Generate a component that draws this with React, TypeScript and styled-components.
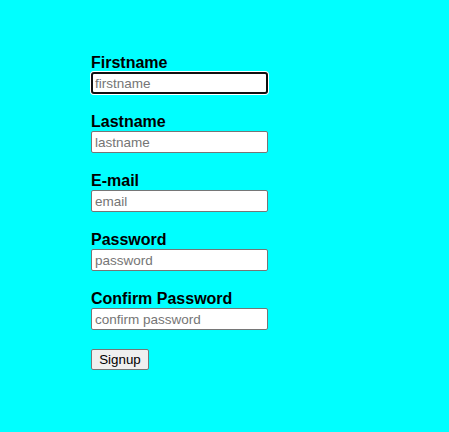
import React from "react";
import styled, { createGlobalStyle, css } from "styled-components";

const GlobalStyle = createGlobalStyle`
  html, body {
    margin: 0;
    padding: 0;
    background: #00ffff;
  }
  body {
    font-family: "Liberation Sans", Arial, sans-serif;
  }
`;

const Page = styled.div`
  width: 449px;
  height: 432px;
  background: #00ffff;
  padding: 54px 0 0 91px;
  box-sizing: border-box;
`;

const Form = styled.form`
  display: flex;
  flex-direction: column;
  align-items: flex-start;
  gap: 19px;
`;

const Field = styled.div`
  display: flex;
  flex-direction: column;
`;

const Label = styled.label`
  font-size: 16px;
  font-weight: bold;
  line-height: 18px;
  color: #000;
`;

interface InputProps {
  $focused?: boolean;
}

const Input = styled.input<InputProps>`
  width: 177px;
  height: 22px;
  box-sizing: border-box;
  margin: 0;
  padding: 1px 3px;
  border: 1px solid #767676;
  border-radius: 2px;
  background: #fff;
  font-family: "Liberation Sans", Arial, sans-serif;
  font-size: 13.5px;
  color: #000;
  outline: none;
  &::placeholder {
    color: #757575;
  }
  ${(p) =>
    p.$focused &&
    css`
      border: 2px solid #101010;
      border-radius: 3px;
      padding: 0 2px;
      box-shadow: 0 0 0 1px #fff;
    `}
`;

const SubmitButton = styled.button`
  height: 21px;
  width: 58px;
  padding: 0;
  border: 1px solid #767676;
  border-radius: 2px;
  background: #efefef;
  font-family: "Liberation Sans", Arial, sans-serif;
  font-size: 13.33px;
  color: #000;
`;

const fields = [
  { label: "Firstname", placeholder: "firstname", type: "text", focused: true },
  { label: "Lastname", placeholder: "lastname", type: "text" },
  { label: "E-mail", placeholder: "email", type: "email" },
  { label: "Password", placeholder: "password", type: "password" },
  { label: "Confirm Password", placeholder: "confirm password", type: "password" },
];

export default function App() {
  return (
    <>
      <GlobalStyle />
      <Page>
        <Form onSubmit={(e) => e.preventDefault()}>
          {fields.map((f) => (
            <Field key={f.label}>
              <Label>{f.label}</Label>
              <Input type={f.type} placeholder={f.placeholder} $focused={f.focused} />
            </Field>
          ))}
          <SubmitButton type="submit">Signup</SubmitButton>
        </Form>
      </Page>
    </>
  );
}
